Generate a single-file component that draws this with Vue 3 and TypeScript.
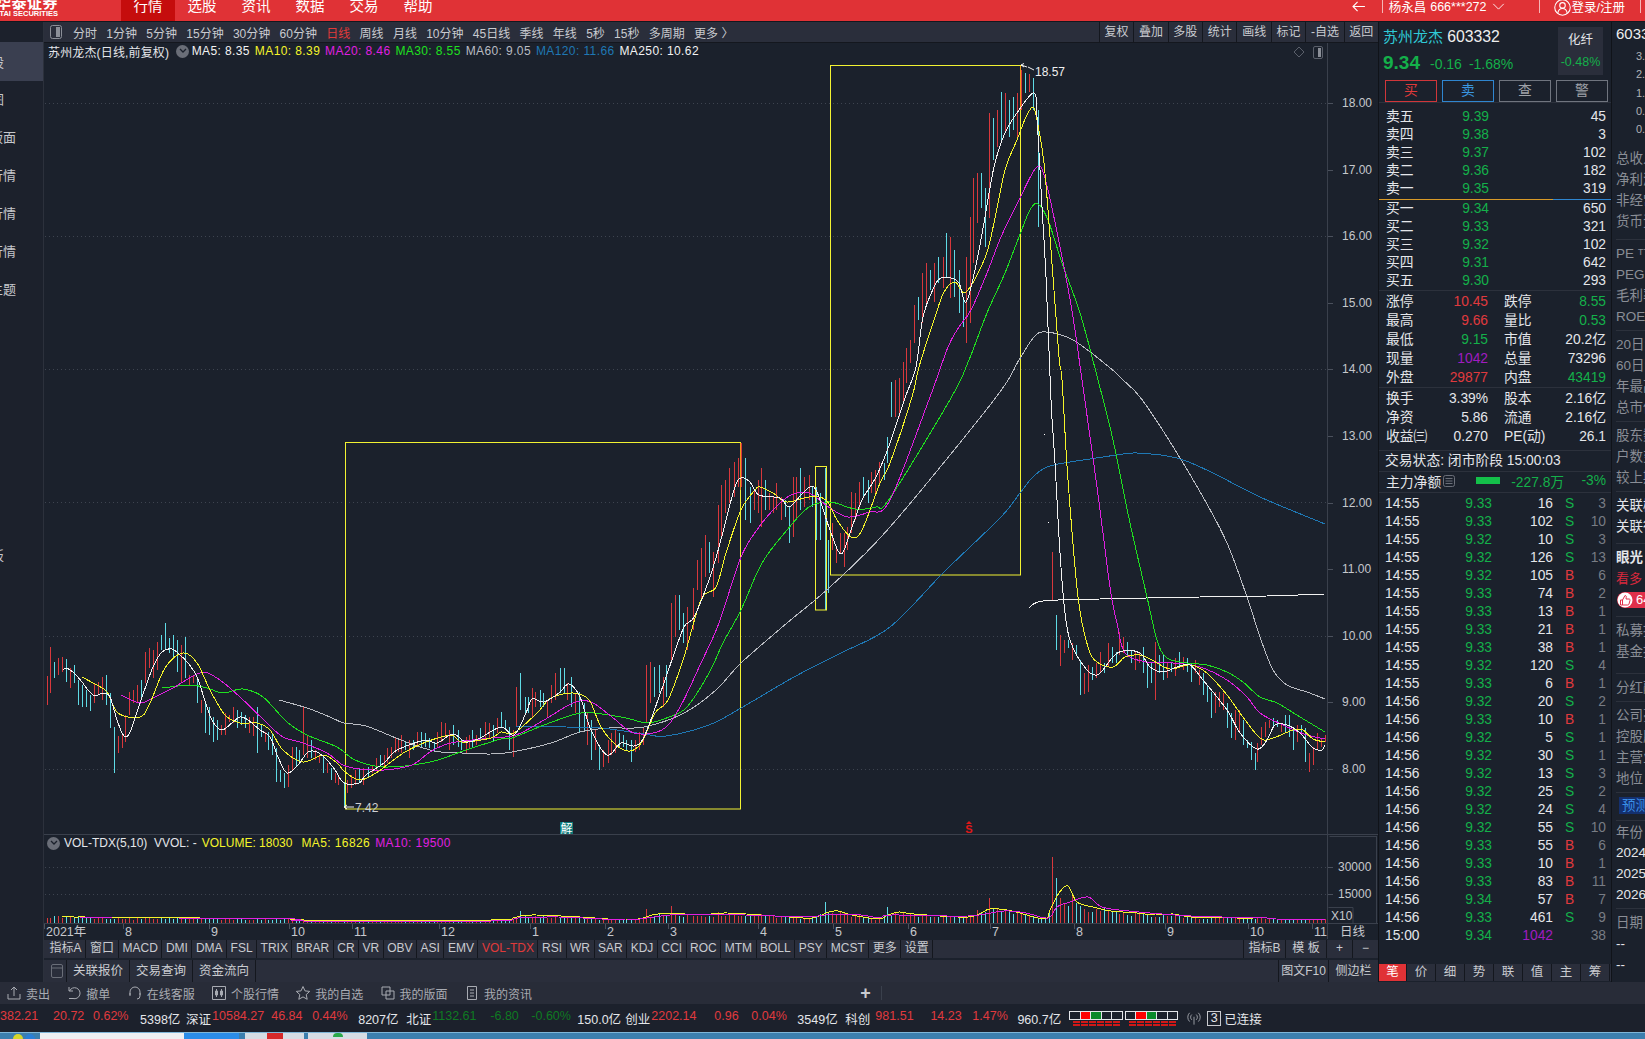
<script setup lang="ts">
type Pt = [number, number]
const pts = (s: string): Pt[] => s.trim().split(/\s+/).map(p => { const [a, b] = p.split(',').map(Number); return [a, b] as Pt })
const smooth = (s: string): string => {
  const p = pts(s)
  let d = `M${p[0][0]} ${p[0][1]}`
  for (let i = 0; i < p.length - 1; i++) {
    const a = p[Math.max(0, i - 1)], b = p[i], c = p[i + 1], e = p[Math.min(p.length - 1, i + 2)]
    d += `C${(b[0] + (c[0] - a[0]) / 6).toFixed(1)} ${(b[1] + (c[1] - a[1]) / 6).toFixed(1)} ${(c[0] - (e[0] - b[0]) / 6).toFixed(1)} ${(c[1] - (e[1] - b[1]) / 6).toFixed(1)} ${c[0]} ${c[1]}`
  }
  return d
}
const ma5 = '63,670 66,668 73,672 82,682 88,690 95,696 103,693 110,697 117,720 124,736 130,732 140,703 153,667 162,652 172,649 180,655 188,663 197,677 207,707 213,722 222,730 233,722 240,717 248,720 260,730 270,737 278,757 287,773 298,765 308,752 317,752 327,760 335,770 344,783 359,783 366,775 384,763 394,752 409,745 426,740 437,743 453,734 466,742 480,738 501,727 514,735 526,713 532,699 544,702 559,693 569,684 580,697 591,730 607,755 621,743 634,746 644,737 659,697 673,657 684,627 694,617 709,580 719,547 734,490 741,478 750,482 759,495 780,498 789,507 801,495 810,487 817,492 830,530 841,554 851,530 862,500 876,477 890,443 905,398 916,367 923,317 934,287 941,278 951,278 959,283 966,302 975,270 984,223 994,167 1005,133 1019,110 1034,93 1037,117 1042,207 1046,277 1051,400 1055,463 1060,553 1065,613 1070,640 1083,665 1097,675 1113,657 1123,651 1140,653 1150,667 1163,672 1177,667 1190,665 1203,680 1227,710 1240,733 1257,749 1267,740 1275,725 1287,725 1300,733 1313,748 1322,750 1325,745'
const ma10 = '82,677 93,683 107,692 118,713 140,717 150,703 165,668 183,653 197,663 210,690 225,715 240,723 257,723 270,730 283,750 303,762 323,755 337,763 345,772 360,780 376,773 387,765 405,752 426,742 451,735 462,742 491,738 501,732 514,733 537,713 551,698 573,693 589,700 601,727 616,745 630,751 642,742 655,713 668,700 684,657 701,600 716,587 726,553 741,510 755,490 760,487 773,493 787,502 809,497 826,500 837,520 851,537 862,530 880,483 890,463 912,397 919,367 934,320 944,292 955,282 966,292 985,258 994,223 1005,170 1017,140 1026,117 1033,107 1037,120 1044,163 1051,250 1059,357 1062,380 1068,480 1078,597 1088,647 1097,662 1113,667 1125,657 1140,655 1152,660 1170,669 1190,665 1207,673 1227,695 1240,713 1260,738 1273,738 1293,730 1303,730 1313,739 1325,742'
const ma20 = '121,695 140,703 153,698 173,688 200,673 217,678 240,697 267,723 283,737 303,743 327,753 343,765 360,769 384,770 412,765 430,752 451,743 491,738 516,735 544,720 573,703 591,702 612,717 634,733 662,730 680,707 701,663 719,623 741,557 759,527 776,507 791,495 809,493 830,508 848,517 869,512 890,500 930,397 948,347 959,327 971,310 987,273 1001,237 1019,200 1037,167 1046,182 1062,257 1073,317 1082,380 1097,487 1110,587 1117,623 1125,653 1147,662 1173,663 1200,667 1227,680 1247,697 1260,713 1283,725 1307,735 1325,739'
const ma30 = '162,688 190,685 207,688 223,693 243,689 263,697 287,722 307,735 337,747 355,760 384,767 430,762 466,750 501,739 512,738 544,725 576,714 594,713 626,718 648,723 669,717 687,707 709,673 723,643 741,610 762,563 787,530 809,507 830,502 855,509 876,507 890,498 951,398 969,360 987,313 1005,273 1019,237 1030,210 1038,204 1048,220 1062,263 1080,313 1098,380 1113,440 1130,523 1147,597 1157,640 1167,658 1187,663 1207,665 1227,672 1243,682 1260,697 1277,703 1300,717 1325,732'
const ma60 = '279,700 307,708 330,717 344,723 366,726 401,740 434,751 462,753 491,754 512,752 551,743 580,732 609,728 644,727 684,713 716,690 741,663 787,623 830,587 890,527 994,400 1019,360 1034,337 1046,332 1073,340 1109,367 1123,380 1140,397 1167,437 1203,497 1227,543 1247,597 1260,637 1273,670 1287,685 1307,692 1325,699'
const ma120 = '516,727 566,727 601,728 644,734 666,736 709,725 741,708 794,677 841,653 890,627 944,572 1000,518 1020,493 1033,477 1050,466 1090,459 1117,455 1137,453 1177,458 1213,473 1260,497 1325,524'
const ma250 = '1029,608 1043,601 1100,599 1200,597 1267,596 1325,594'
const lines = [
  { d: smooth(ma60), c: '#b9bcc2' }, { d: smooth(ma120), c: '#1f78b4' }, { d: smooth(ma250), c: '#f2f2f2' },
  { d: smooth(ma30), c: '#1fe01f' }, { d: smooth(ma20), c: '#e01fe0' }, { d: smooth(ma10), c: '#f5f52a' }, { d: smooth(ma5), c: '#f2f2f2' },
]

interface Bar { x: number; y1: number; y2: number; up: boolean }
const parse = (s: string, ox: number, oy: number, sx: number): Bar[] => s.trim().split(/\s+/).map(t => {
  const [z, a, b, c] = t.split(',').map(Number)
  return { x: Math.round(ox + z / sx) + 0.5, y1: Math.round(oy + a / 3), y2: Math.round(oy + b / 3), up: c === 1 }
})
const bars: Bar[] = [
  ...parse('20,228,315,1 31,140,280,1 43,185,235,0 55,175,225,1 67,170,215,1 79,178,245,0 91,205,265,1 103,195,250,0 115,240,315,0 127,255,320,0 139,270,320,0 151,285,332,0 163,250,310,1 175,245,285,1 187,232,300,1 199,225,315,0 211,280,385,0 223,382,518,0 233,408,458,1 245,405,445,1 256,345,425,1 268,275,345,1 280,270,310,1 292,255,310,1 304,240,290,0 316,155,250,1 328,145,205,1 340,150,235,1 352,125,210,1 364,105,150,0 376,70,150,0 388,115,160,0 400,105,175,0 412,120,215,0 424,135,245,1 436,110,235,0 448,225,255,1 460,225,250,1 470,230,310,0 482,300,340,1 494,310,400,0 506,320,405,0 518,350,425,0 530,360,420,0 542,375,405,1 554,340,405,1 566,345,365,1 578,320,370,1 590,330,385,0 602,335,375,0 614,345,385,0 626,350,400,1 638,350,408,1 650,320,458,0 662,375,410,0 674,395,425,1 685,395,450,0 695,400,465,0 707,445,545,0 719,510,545,0 731,520,565,0 743,495,560,1 755,440,510,1 767,440,500,0 778,450,490,0 790,320,465,1 802,405,475,1 814,420,475,0 826,450,480,1 838,465,490,1 850,465,520,0 862,490,520,1 872,505,540,0 884,520,550,1 895,525,555,1', 40, 600, 3),
  ...parse('38,1055,1130,0 47,1050,1090,1 58,1035,1075,1 70,1020,1065,1 82,1015,1060,0 93,1015,1065,1 105,1010,1040,0 117,1005,1030,1 128,985,1020,1 140,975,1010,0 150,975,1015,1 160,955,1000,1 171,950,985,1 181,925,970,1 190,930,965,1 200,915,970,1 210,935,960,0 222,930,985,1 233,930,960,0 244,905,945,1 255,905,950,0 266,910,950,0 278,925,955,0 290,935,965,0 300,905,950,1 311,875,935,1 322,880,920,1 334,900,960,1 345,885,945,0 357,900,950,0 368,930,960,0 380,920,970,1 389,915,955,1 398,900,950,0 410,915,945,1 421,895,930,0 433,875,930,1 444,880,925,1 455,885,935,0 467,865,910,1 478,845,890,0 490,870,900,0 500,890,960,0 512,900,980,1 522,770,890,1 533,730,840,0 545,800,850,0 555,800,850,0 565,775,860,1 575,785,830,1 587,780,830,0 597,790,830,0 608,810,860,1 620,765,820,1 631,730,810,1 643,715,790,0 655,715,790,0 664,760,810,1 676,740,830,0 687,790,850,1 698,785,910,0 710,820,905,0 720,850,945,1 732,870,990,0 743,900,960,1 754,950,1020,0 765,960,1010,1 777,930,1000,1 788,910,975,1 797,900,970,1 808,910,950,0 820,915,950,0 830,930,960,0 842,930,995,0 853,930,965,1 864,905,960,1 875,890,945,1 885,705,880,1 897,695,820,1 908,710,800,0 920,705,790,0 932,740,830,1 942,705,800,0 954,520,690,1 965,495,620,1 976,495,600,0 987,550,640,0 1000,530,660,1 1017,475,600,1 1028,390,480,1 1040,355,510,1 1050,315,440,1 1062,335,430,0 1073,365,500,1 1085,225,400,1 1096,165,320,1 1107,150,250,1 1118,115,220,1 1130,95,200,1 1141,85,170,1 1152,38,170,1 1163,85,270,0 1175,170,280,0 1186,180,240,1 1197,150,250,1 1206,115,290,1 1218,150,240,0 1230,190,240,1 1240,200,250,1 1250,160,240,1 1262,200,270,1 1273,210,260,0 1284,230,340,0 1295,140,320,1 1306,140,270,1 1317,115,240,0 1328,140,230,1 1340,135,210,1 1350,170,230,0 1362,170,330,0 1373,190,330,0 1385,115,540,0 1395,330,490,0 1405,280,360,1 1418,350,400,1 1428,310,370,1 1438,310,410,1 1448,290,360,1 1459,185,310,1 1470,190,270,1 1482,155,240,1 1493,140,200,0 1505,150,220,0 1516,125,190,1 1527,120,190,1 1538,95,165,1 1550,100,150,0 1560,20,100,0', 330, 430, 2.8),
  ...parse('312,995,1100,0 323,990,1100,1 333,985,1100,1 343,935,1060,1 354,895,1000,1 365,870,940,1 376,765,880,1 387,740,810,0 398,670,820,1 410,640,760,1 421,660,720,0 432,640,755,1 443,620,700,0 455,620,715,1 466,550,680,0 477,560,745,1 488,600,740,0 500,660,790,0 511,740,830,0 522,620,880,1 533,500,820,1 540,385,640,1 552,370,520,1 563,370,475,0 575,415,590,0 586,190,505,1 597,205,330,0 608,180,290,1 620,125,280,0 631,130,250,1 642,150,260,0 653,140,240,0 664,130,260,1 675,60,180,1 686,68,130,0 698,72,125,1 708,85,180,0 722,180,530,0', 780, 50, 2.8),
  ...parse('157,515,660,1 169,705,810,0 181,765,858,1 193,780,820,1 205,780,805,0 217,790,840,1 229,795,825,0 241,840,945,0 253,880,942,1 265,855,935,1 277,860,900,0 289,850,895,1 301,815,875,1 313,850,880,0 325,790,860,1 337,800,850,0 349,815,850,0 358,755,825,1 369,770,820,1 381,785,830,0 393,810,850,0 405,815,870,1 417,820,850,1 430,800,880,0 442,855,925,0 454,850,910,0 466,785,960,1 478,825,880,0 490,825,900,0 502,850,895,1 514,850,875,0 526,835,888,1 538,815,865,0 550,830,870,1 560,835,875,0 572,850,905,0 584,840,880,1 596,870,915,1 608,880,945,0 620,915,965,0 632,935,1015,0 644,935,1000,1 656,935,980,1 668,940,990,1 680,970,1045,0 692,1000,1075,0 704,990,1080,1 716,990,1060,1 728,1020,1095,0 740,1080,1105,0 752,1085,1140,0 764,1120,1170,0 772,1090,1145,1 784,1040,1095,1 796,1025,1070,1 808,1020,1045,1 820,1015,1040,0 832,1020,1040,0 844,1030,1055,1 856,1005,1060,0 868,1005,1070,0 880,1050,1110,0 892,1035,1085,1 904,1035,1060,0 916,1045,1145,0 928,1120,1175,1 940,1100,1155,1 952,1060,1110,1 964,1075,1100,1 975,1065,1085,1', 1000, 380, 3),
]
const candlePath = (up: boolean) => bars.filter(b => b.up === up).map(b => `M${b.x} ${b.y1}V${b.y2}`).join('')

const vma5 = '62,916 74,917 85,917 112,918 200,918 295,919 304,920 491,920 513,918 520,916 536,915 580,917 625,920 643,918 652,915 670,913 700,915 727,913 789,917 812,918 829,912 838,911 852,915 879,919 888,915 899,912 914,914 968,917 990,909 1012,911 1044,919 1050,910 1059,893 1068,886 1077,902 1093,907 1111,911 1137,913 1155,915 1173,914 1191,917 1236,918 1267,918 1276,919 1325,919'
const vma10 = '80,917 112,918 179,918 295,919 304,921 491,921 518,918 558,917 625,920 647,918 670,915 700,915 745,915 807,917 825,915 861,915 879,918 892,915 968,916 1004,911 1026,913 1048,918 1057,907 1070,902 1088,897 1102,907 1129,911 1191,916 1267,918 1276,919 1325,919'
const lerp = (p: Pt[], x: number): number => {
  if (x <= p[0][0]) return p[0][1]
  for (let i = 1; i < p.length; i++) if (x <= p[i][0]) return p[i - 1][1] + (p[i][1] - p[i - 1][1]) * (x - p[i - 1][0]) / (p[i][0] - p[i - 1][0])
  return p[p.length - 1][1]
}
const vp = pts(vma5)
let seed = 17
const rnd = () => { seed = (seed * 16807) % 2147483647; return seed / 2147483647 }
const spikes: Pt[] = [[520, 911], [646, 909], [670, 906], [824, 902], [887, 907], [977, 910], [989, 898], [1053, 857], [1057, 878], [1061, 898], [1065, 903], [1069, 906]]
const volBars = [...bars, ...[1041, 1045, 1049].map(x => ({ x: x + 0.5, y1: 0, y2: 0, up: false }))].map(b => {
  const ma = lerp(vp, b.x)
  let top = Math.round(922 - Math.max(2, (922 - ma) * (0.6 + rnd() * 0.55)))
  const s = spikes.find(q => Math.abs(q[0] - b.x) < 2)
  if (s) top = s[1]
  return { x: b.x, top, up: b.up }
})
const volPath = (up: boolean) => volBars.filter(b => b.up === up).map(b => `M${b.x} ${b.top}V923`).join('')

const gridY = [103, 236, 369, 502, 636, 769]
const priceAxis = [18, 17, 16, 15, 14, 13, 12, 11, 10, 9, 8].map(p => ({ y: Math.round(769 - (p - 8) * 66.6), t: p.toFixed(2) }))
const months: [number, string][] = [[46, '2021年'], [125, '8'], [211, '9'], [291, '10'], [354, '11'], [441, '12'], [532, '1'], [607, '2'], [670, '3'], [760, '4'], [835, '5'], [910, '6'], [992, '7'], [1076, '8'], [1167, '9'], [1250, '10'], [1314, '11']]

const navs = ['行情', '选股', '资讯', '数据', '交易', '帮助']
const sideItems = [
  { t: '个股', cls: 'short active' }, { t: '分时图', cls: 'short' }, { t: '我的版面', cls: 'long' }, { t: '沪深行情', cls: 'long' },
  { t: '港股行情', cls: 'long' }, { t: '期货行情', cls: 'long' }, { t: '热门主题', cls: 'long' },
]
const periods = ['分时', '1分钟', '5分钟', '15分钟', '30分钟', '60分钟', '日线', '周线', '月线', '10分钟', '45日线', '季线', '年线', '5秒', '15秒', '多周期', '更多 〉']
const rightTools = ['复权', '叠加', '多股', '统计', '画线', '标记', '-自选', '返回']
const legend = [
  { t: 'MA5: 8.35', c: 'c-white' }, { t: 'MA10: 8.39', c: 'c-yellow' }, { t: 'MA20: 8.46', c: 'c-mag' }, { t: 'MA30: 8.55', c: 'c-lime' },
  { t: 'MA60: 9.05', c: 'c-gray' }, { t: 'MA120: 11.66', c: 'c-blue' }, { t: 'MA250: 10.62', c: 'c-white' },
]
const indicators = ['MACD', 'DMI', 'DMA', 'FSL', 'TRIX', 'BRAR', 'CR', 'VR', 'OBV', 'ASI', 'EMV', 'VOL-TDX', 'RSI', 'WR', 'SAR', 'KDJ', 'CCI', 'ROC', 'MTM', 'BOLL', 'PSY', 'MCST', '更多', '设置']
const asks = [['卖五', '9.39', '45'], ['卖四', '9.38', '3'], ['卖三', '9.37', '102'], ['卖二', '9.36', '182'], ['卖一', '9.35', '319']]
const bids = [['买一', '9.34', '650'], ['买二', '9.33', '321'], ['买三', '9.32', '102'], ['买四', '9.31', '642'], ['买五', '9.30', '293']]
const stats1 = [
  ['涨停', '10.45', 'red', '跌停', '8.55', 'green'], ['最高', '9.66', 'red', '量比', '0.53', 'green'], ['最低', '9.15', 'green', '市值', '20.2亿', 'white'],
  ['现量', '1042', 'purple', '总量', '73296', 'white'], ['外盘', '29877', 'red', '内盘', '43419', 'green'],
]
const stats2 = [
  ['换手', '3.39%', 'white', '股本', '2.16亿', 'white'], ['净资', '5.86', 'white', '流通', '2.16亿', 'white'], ['收益㈢', '0.270', 'white', 'PE(动)', '26.1', 'white'],
]
const ticks: [string, string, string, string, string][] = [
  ['14:55', '9.33', '16', 'S', '3'], ['14:55', '9.33', '102', 'S', '10'], ['14:55', '9.32', '10', 'S', '3'], ['14:55', '9.32', '126', 'S', '13'],
  ['14:55', '9.32', '105', 'B', '6'], ['14:55', '9.33', '74', 'B', '2'], ['14:55', '9.33', '13', 'B', '1'], ['14:55', '9.33', '21', 'B', '1'],
  ['14:55', '9.33', '38', 'B', '1'], ['14:55', '9.32', '120', 'S', '4'], ['14:55', '9.33', '6', 'B', '1'], ['14:56', '9.32', '20', 'S', '2'],
  ['14:56', '9.33', '10', 'B', '1'], ['14:56', '9.32', '5', 'S', '1'], ['14:56', '9.32', '30', 'S', '1'], ['14:56', '9.32', '13', 'S', '3'],
  ['14:56', '9.32', '25', 'S', '2'], ['14:56', '9.32', '24', 'S', '4'], ['14:56', '9.32', '55', 'S', '10'], ['14:56', '9.33', '55', 'B', '6'],
  ['14:56', '9.33', '10', 'B', '1'], ['14:56', '9.33', '83', 'B', '11'], ['14:56', '9.34', '57', 'B', '7'], ['14:56', '9.33', '461', 'S', '9'],
  ['15:00', '9.34', '1042', '', '38'],
]
const quoteTabs = ['笔', '价', '细', '势', '联', '值', '主', '筹']
const sideGroups: { rows: string[]; tail?: string }[] = [
  { rows: ['总收入', '净利润', '非经常', '货币资'], tail: 'tail-a' },
  { rows: ['PE ᵀᵀᴹ', 'PEG', '毛利率', 'ROE'] },
  { rows: ['20日涨', '60日涨', '年最高', '总市值'] },
  { rows: ['股东数', '户数变', '较上期'] },
]
const sideGroups2: { rows: string[]; tail?: string }[] = [
  { rows: ['私募持', '基金持'], tail: 'tail-b' },
  { rows: ['分红融'] },
  { rows: ['公司亮', '控股股', '主营业', '地位'] },
]
const actions = [
  { t: '卖出', d: 'M2 9v5h12V9M8 11V2M5 5l3-3 3 3' },
  { t: '撤单', d: 'M3 2v4h4M3.5 6A5.5 5.5 0 1 1 7 13.5H3' },
  { t: '在线客服', d: 'M3 10V7a5 5 0 0 1 10 0v3M3 8v3M13 8v3a3 3 0 0 1-3 3' },
  { t: '个股行情', d: 'M1.5 1.5h13v13h-13zM5.5 4v8M10.5 4v8M4.5 6h2v4h-2zM9.5 6h2v4h-2z' },
  { t: '我的自选', d: 'M8 1.5l2 4.4 4.7.5-3.5 3.2 1 4.7L8 11.9l-4.2 2.4 1-4.7L1.3 6.4 6 5.9z' },
  { t: '我的版面', d: 'M2 2h8v8H2zM6 6h8v8H6z' },
  { t: '我的资讯', d: 'M3.5 1.5h9v13h-9zM6 5h4M6 8h4M6 11h4' },
]
const indices = [
  { price: '382.21', chg: '20.72', pct: '0.62%', amt: '5398亿', cls: 'red', m: [0, 0, 14.8, 8.7, 11.6] },
  { name: '深证', price: '10584.27', chg: '46.84', pct: '0.44%', amt: '8207亿', cls: 'red', m: [5.7, 1, 7, 9.7, 10.6] },
  { name: '北证', price: '1132.61', chg: '-6.80', pct: '-0.60%', amt: '150.0亿', cls: 'dgreen', m: [7.7, 1, 13.8, 12.5, 6.4] },
  { name: '创业', price: '2202.14', chg: '0.96', pct: '0.04%', amt: '3549亿', cls: 'red', m: [4.2, 1, 17.8, 12.7, 10.6] },
  { name: '科创', price: '981.51', chg: '14.23', pct: '1.47%', amt: '960.7亿', cls: 'red', m: [7.7, 5, 16.8, 10.7, 9.6] },
]
const px = (n: number) => ({ marginLeft: `${n}px` })
const meterCells = ['#1c212c', '#f00', '#0a8a2a', '#1c212c', '#1c212c']
</script>

<template>
  <div class="app">
    <header class="topbar">
      <div class="logo">
        <div class="logo-cn">华泰证券</div>
        <div class="logo-en">HUATAI SECURITIES</div>
      </div>
      <nav class="nav">
        <span v-for="(n, i) in navs" :key="n" class="nav-item" :class="{ on: i === 0 }">{{ n }}</span>
      </nav>
      <div class="user">
        <svg class="back" viewBox="0 0 16 12"><path d="M15 6H2M7 1L2 6l5 5" /></svg>
        <span class="vsep"></span>
        <span class="uname">杨永昌</span><span class="uid">666***272</span>
        <svg class="chev" viewBox="0 0 14 8"><path d="M1 1l6 6 6-6" /></svg>
        <span class="vsep sep2"></span>
        <svg class="uicon" viewBox="0 0 16 16"><circle cx="8" cy="8" r="7.3" /><circle cx="8" cy="6" r="2.6" /><path d="M3.5 13.5c.5-3 2.5-4.5 4.5-4.5s4 1.500 4.500 4.500" /></svg>
        <span class="login">登录/注册</span>
        <span class="vsep sep3"></span>
      </div>
    </header>

    <div class="body">
      <aside class="sidebar">
        <div v-for="s in sideItems" :key="s.t" class="side-item" :class="s.cls"><span>{{ s.t }}</span></div>
        <div class="side-spacer"></div>
        <div class="side-item short"><span>板</span></div>
      </aside>

      <main class="center">
        <div class="toolbar">
          <svg class="panel-ico" viewBox="0 0 12 14"><rect x="0.5" y="0.5" width="11" height="13" rx="2" /><rect x="6" y="2" width="4" height="10" class="fill" /></svg>
          <span v-for="p in periods" :key="p" class="period" :class="{ sel: p === '日线' }">{{ p }}</span>
          <div class="tools">
            <span v-for="t in rightTools" :key="t" class="tool">{{ t }}</span>
          </div>
        </div>

        <div class="chart">
          <svg class="plot" width="1334" height="896" viewBox="44 43 1334 896">
            <g class="grid">
              <line v-for="y in gridY" :key="y" x1="45" x2="1326" :y1="y + 0.5" :y2="y + 0.5" />
              <line x1="45" x2="1326" y1="867.5" y2="867.5" />
              <line x1="45" x2="1326" y1="894.500" y2="894.500" />
            </g>
            <g class="frame">
              <line x1="1327.5" x2="1327.5" y1="43" y2="939" />
              <line x1="44" x2="1378" y1="834.5" y2="834.5" />
              <line x1="44" x2="1378" y1="923.5" y2="923.5" />
              <line x1="1329.5" x2="1376.5" y1="836.5" y2="836.5" />
              <line x1="1376.5" x2="1376.5" y1="836" y2="923" />
              <path d="M1328.500 907.500H1353V923" fill="none" />
            </g>
            <g v-for="a in priceAxis" :key="a.t">
              <line class="tick" x1="1328" x2="1333" :y1="a.y + 0.5" :y2="a.y + 0.5" />
              <text class="axis" x="1342" :y="a.y + 4">{{ a.t }}</text>
            </g>

            <g class="bars" shape-rendering="crispEdges">
              <path :d="candlePath(true)" stroke="#d8383c" />
              <path :d="candlePath(false)" stroke="#5fdbe6" />
              <path :d="volPath(true)" stroke="#d8383c" />
              <path :d="volPath(false)" stroke="#5fdbe6" />
            </g>
            <rect class="box" x="345.500" y="442.500" width="395" height="366.500" />
            <rect class="box" x="815.500" y="466.500" width="11" height="143.500" />
            <rect class="box" x="830.500" y="65.500" width="190" height="509.500" />
            <path class="orange" d="M740.500 443V490M1020.500 66V110" />
            <path v-for="l in lines" :key="l.d" :d="l.d" :stroke="l.c" class="ma" shape-rendering="crispEdges" />
            <path :d="smooth(vma5)" stroke="#f5f52a" class="ma" shape-rendering="crispEdges" />
            <path :d="smooth(vma10)" stroke="#e01fe0" class="ma" shape-rendering="crispEdges" />
            <rect x="1044" y="434" width="1" height="1" fill="#fff" />
            <rect x="1048" y="522" width="1" height="1" fill="#fff" />

            <path class="note" d="M1021 65l6 2M1028 67l6 3M1021 65l3-1.500M1021 65l3 2" />
            <text class="lbl" x="1035" y="76">18.57</text>
            <path class="note" d="M344 807h10M344 807l3-2M344 807l3 2" />
            <text class="lbl dim" x="355" y="812">7.42</text>

            <rect x="560" y="822" width="13" height="12" fill="#0e7a7a" />
            <text class="mark" x="566.500" y="833">解</text>
            <path d="M969 821l-3 3h6z" fill="#e01818" />
            <text class="mark s" x="969" y="833">S</text>

            <path class="ico" d="M1299 47l5 5-5 5-5-5z" />
            <rect class="ico" x="1313.500" y="46.500" width="9" height="12" rx="1.500" />
            <rect x="1318" y="48" width="3" height="9" fill="#8b8f98" />

            <text class="axis" x="1338" y="871">30000</text>
            <line class="tick" x1="1328" x2="1333" y1="867.500" y2="867.500" />
            <text class="axis" x="1338" y="898">15000</text>
            <line class="tick" x1="1328" x2="1333" y1="894.500" y2="894.500" />
            <text class="axis" x="1331" y="920">X10</text>

            <g v-for="m in months" :key="m[0]">
              <line class="tick" :x1="m[0] - 1.500" :x2="m[0] - 1.500" y1="924" y2="929" />
              <text class="axis time" :x="m[0]" y="936">{{ m[1] }}</text>
            </g>
            <text class="axis time" x="1340" y="936">日线</text>
          </svg>

          <div class="legend">
            <span class="lg-title">苏州龙杰(日线,前复权)</span>
            <span class="drop top"><svg viewBox="0 0 8 6"><path d="M1 1l3 3 3-3" /></svg></span>
            <span v-for="l in legend" :key="l.t" class="lg-item" :class="l.c">{{ l.t }}</span>
          </div>
          <div class="legend vol">
            <span class="drop"><svg viewBox="0 0 8 6"><path d="M1 1l3 3 3-3" /></svg></span>
            <span class="vol-name">VOL-TDX(5,10) &nbsp;VVOL: -</span>
            <span class="c-yellow v-a">VOLUME: 18030</span>
            <span class="c-yellow v-b">MA5: 16826</span>
            <span class="c-mag v-b">MA10: 19500</span>
          </div>
        </div>

        <div class="ind-tabs">
          <span class="tab first">指标A</span>
          <span class="tab win">窗口</span>
          <span v-for="i in indicators" :key="i" class="tab" :class="{ sel: i === 'VOL-TDX' }">{{ i }}</span>
          <span class="ind-right">
            <span class="tab fix-a">指标B</span>
            <span class="tab fix-b">模 板</span>
            <span class="tab sq">+</span>
            <span class="tab sq">−</span>
          </span>
        </div>
        <div class="rel-tabs">
          <span class="tab ic"><svg viewBox="0 0 12 14"><rect x="0.500" y="0.500" width="11" height="13" rx="1.500" /><path d="M1 4h10" /></svg></span>
          <span class="tab wide">关联报价</span>
          <span class="tab wide">交易查询</span>
          <span class="tab wide">资金流向</span>
          <span class="ind-right">
            <span class="tab f10">图文F10</span>
            <span class="tab f10">侧边栏</span>
          </span>
        </div>
      </main>

      <section class="quote">
        <div class="q-head">
          <div class="q-info">
            <div class="q-name"><span class="q-cn">苏州龙杰</span> <span class="q-code">603332</span></div>
            <div class="q-price"><b>9.34</b><span class="qp1">-0.16</span><span class="qp2">-1.68%</span></div>
          </div>
          <div class="q-sector"><span>化纤</span><em>-0.48%</em></div>
        </div>
        <div class="q-btns">
          <span class="qb buy">买</span><span class="qb sell">卖</span><span class="qb">查</span><span class="qb">警</span>
        </div>
        <div class="book asks">
          <div v-for="r in asks" :key="r[0]" class="row"><span class="l">{{ r[0] }}</span><span class="p green">{{ r[1] }}</span><span class="v">{{ r[2] }}</span></div>
        </div>
        <div class="split"><i></i><u></u></div>
        <div class="book">
          <div v-for="r in bids" :key="r[0]" class="row"><span class="l">{{ r[0] }}</span><span class="p green">{{ r[1] }}</span><span class="v">{{ r[2] }}</span></div>
        </div>
        <div class="hr"></div>
        <div class="stats">
          <div v-for="r in stats1" :key="r[0]" class="srow"><span class="sl">{{ r[0] }}</span><span class="sv" :class="r[2]">{{ r[1] }}</span><span class="sl second">{{ r[3] }}</span><span class="sv" :class="r[5]">{{ r[4] }}</span></div>
        </div>
        <div class="hr"></div>
        <div class="stats pad">
          <div v-for="r in stats2" :key="r[0]" class="srow"><span class="sl">{{ r[0] }}</span><span class="sv" :class="r[2]">{{ r[1] }}</span><span class="sl second">{{ r[3] }}</span><span class="sv" :class="r[5]">{{ r[4] }}</span></div>
        </div>
        <div class="hr"></div>
        <div class="state">交易状态: 闭市阶段 15:00:03</div>
        <div class="hr"></div>
        <div class="flow">
          <span>主力净额</span>
          <svg class="flow-ico" viewBox="0 0 12 12"><rect x="0.500" y="0.500" width="11" height="11" rx="2" /><path d="M2.500 3.500h7M2.500 6h7M2.500 8.500h7" /></svg>
          <i class="flow-bar"></i>
          <span class="green fa">-227.8万</span>
          <span class="green fb">-3%</span>
        </div>
        <div class="hr"></div>
        <div class="ticks">
          <div v-for="(t, i) in ticks" :key="i" class="tk">
            <span class="t1">{{ t[0] }}</span>
            <span class="t2 green">{{ t[1] }}</span>
            <span class="t3" :class="{ purple: t[2] === '1042' }">{{ t[2] }}</span>
            <span class="t4" :class="t[3] === 'B' ? 'red' : 'green'">{{ t[3] }}</span>
            <span class="t5">{{ t[4] }}</span>
          </div>
        </div>
        <div class="q-tabs">
          <span v-for="(q, i) in quoteTabs" :key="q" class="qt" :class="{ on: i === 0 }">{{ q }}</span>
        </div>
      </section>

      <aside class="extra">
        <div class="ex-code">603332</div>
        <div class="ex-nums"><span>3.16</span><span>2.41</span><span>1.60</span><span>0.80</span><span>0.00</span></div>
        <div class="ex-list">
          <div v-for="g in sideGroups" :key="g.rows[0]" class="ex-group" :class="g.tail">
            <div v-for="r in g.rows" :key="r" class="ex-row">{{ r }}</div>
          </div>
          <div class="ex-group tail-c">
            <div class="ex-row white">关联概念</div>
            <div class="ex-row white">关联行业</div>
          </div>
          <div class="ex-group tail-c">
            <div class="ex-row white bold">眼光</div>
            <div class="ex-row redtxt">看多</div>
            <div class="ex-row thumb">
              <span class="pill"><svg viewBox="0 0 16 16"><circle cx="8" cy="8" r="7.500" fill="#fff" /><path d="M3.500 8h2v5h-2zM5.500 8l2.500-4.500c1 0 1.500.8 1.200 2L9 7h3c.8 0 1.200.6 1 1.300l-1 3.700c-.2.600-.6 1-1.300 1H5.500" fill="none" stroke="#e0304a" stroke-width="1" /></svg><b>64</b></span>
            </div>
          </div>
          <div v-for="g in sideGroups2" :key="g.rows[0]" class="ex-group" :class="g.tail">
            <div v-for="r in g.rows" :key="r" class="ex-row">{{ r }}</div>
          </div>
          <div class="ex-group predict-g">
            <div class="ex-row"><span class="predict">预测</span></div>
          </div>
          <div class="ex-group tight-t">
            <div class="ex-row head">年份</div>
            <div class="ex-row white">2024</div>
            <div class="ex-row white">2025</div>
            <div class="ex-row white">2026</div>
          </div>
          <div class="ex-group last">
            <div class="ex-row">日期</div>
            <div class="ex-row white">--</div>
            <div class="ex-row white">--</div>
          </div>
        </div>
      </aside>
    </div>

    <div class="actions">
      <span v-for="a in actions" :key="a.t" class="act">
        <svg viewBox="0 0 16 16"><path :d="a.d" /></svg>{{ a.t }}
      </span>
      <span class="plus">+</span>
      <span class="plus-sep"></span>
    </div>

    <div class="status">
      <span v-for="x in indices" :key="x.price" class="idx">
        <span v-if="x.name" class="i-name" :style="px(x.m[0])">{{ x.name }}</span>
        <span :class="x.cls" :style="px(x.m[1])">{{ x.price }}</span>
        <span :class="x.cls" :style="px(x.m[2])">{{ x.chg }}</span>
        <span :class="x.cls" :style="px(x.m[3])">{{ x.pct }}</span>
        <span class="i-amt" :style="px(x.m[4])">{{ x.amt }}</span>
      </span>
      <span v-for="m in 2" :key="m" class="meter">
        <span class="cells"><i v-for="(c, i) in meterCells" :key="i" :style="{ background: c }"></i></span>
        <span class="dashes"><i v-for="d in 6" :key="d"></i></span>
      </span>
      <svg class="signal" viewBox="0 0 16 16"><path d="M8 6v9M5.500 3.500a4 4 0 0 0 0 6M10.500 3.500a4 4 0 0 1 0 6M3 1.500a7 7 0 0 0 0 10M13 1.500a7 7 0 0 1 0 10" /></svg>
      <span class="conn-n">3</span>
      <span class="conn">已连接</span>
    </div>

    <footer class="taskbar">
      <span class="dot d1"></span><span class="dot d2"></span>
      <span class="tb-white"></span><span class="tb-blue"></span>
      <span class="tb-tile"><i class="tile-red"></i></span>
      <span class="tb-tile"><i class="tile-green"></i></span>
    </footer>
  </div>
</template>

<style scoped>
.app {
  width: 1645px;
  height: 1039px;
  overflow: hidden;
  display: flex;
  flex-direction: column;
  background: #1b212c;
  color: #e4e6ea;
  font-family: "Liberation Sans", "Noto Sans CJK SC", sans-serif;
  font-size: 12px;
}
svg { display: block; }

/* top bar */
.topbar {
  height: 22px;
  box-sizing: border-box;
  flex: none;
  background: #e03236;
  display: flex;
  color: #fff;
  border-bottom: 1px solid #14171e;
  overflow: hidden;
}
.logo { width: 121px; flex: none; overflow: hidden; display: flex; flex-direction: column; align-items: flex-end; padding-right: 63px; box-sizing: border-box; }
.logo-cn { font-size: 15px; font-weight: 700; line-height: 10px; margin-top: -2px; white-space: nowrap; letter-spacing: 0.5px; }
.logo-en { font-size: 7.5px; font-weight: 700; line-height: 10px; margin-top: 1px; white-space: nowrap; }
.nav { display: flex; }
.nav-item { width: 54px; height: 21px; font-size: 14.500px; line-height: 12px; text-align: center; }
.nav-item.on { background: #c50d0d; }
.user { margin-left: auto; display: flex; height: 13px; align-items: center; }
.back { width: 15px; height: 11px; fill: none; stroke: #fff; stroke-width: 1.200; margin-right: 16px; }
.vsep { width: 1px; height: 13px; background: #f5b5b5; }
.uname { margin-left: 6px; font-size: 12.500px; white-space: nowrap; }
.uid { margin-left: 4px; font-size: 12.500px; white-space: nowrap; }
.chev { width: 13px; height: 7px; fill: none; stroke: #fff; margin-left: 5px; }
.sep2 { margin-left: 34px; }
.uicon { width: 17px; height: 17px; fill: none; stroke: #fff; margin-left: 14px; margin-top: 2px; }
.login { margin-left: 1px; font-size: 12.500px; }
.sep3 { margin-left: 15px; margin-right: 4px; }

.body { display: flex; height: 960px; flex: none; }

/* sidebar */
.sidebar { width: 44px; flex: none; box-sizing: border-box; border-right: 1px solid #2c313c; display: flex; flex-direction: column; overflow: hidden; background: #1c212c; padding-top: 20px; }
.side-item { height: 38px; flex: none; display: flex; justify-content: flex-end; align-items: center; font-size: 13px; color: #c6c8cc; white-space: nowrap; overflow: hidden; }
.side-item span { flex: none; }
.side-item.short { padding-right: 39px; }
.side-item.long { padding-right: 27px; }
.side-item.active { background: #3a3f50; height: 39px; margin-bottom: -2px; }
.side-spacer { height: 228px; flex: none; }

/* center */
.center { width: 1334px; flex: none; display: flex; flex-direction: column; }
.toolbar { height: 21px; box-sizing: border-box; flex: none; display: flex; align-items: center; background: #2a2e3b; border-bottom: 1px solid #14171e; color: #c9cbd0; padding-left: 6px; }
.panel-ico { width: 12px; height: 14px; fill: none; stroke: #8b8f98; margin-right: 11px; flex: none; }
.panel-ico .fill { fill: #8b8f98; stroke: none; }
.period { margin-right: 9.300px; white-space: nowrap; }
.period.sel { color: #e03a3a; }
.tools { margin-left: auto; display: flex; height: 20px; }
.tool { padding: 0 4.700px; line-height: 20px; border-left: 1px solid #14171e; white-space: nowrap; }

.chart { position: relative; height: 896px; flex: none; }
.plot { display: block; }
.grid line { stroke: #3e4450; stroke-dasharray: 1 3; }
.frame line, .frame path { stroke: #3a404c; }
.tick { stroke: #4a505c; }
.axis { fill: #c6c8cc; font-size: 12px; }
.axis.time { font-size: 12.500px; }
.bars path { fill: none; stroke-width: 1; }
.box { fill: none; stroke: #f2f232; stroke-width: 1; }
.orange { fill: none; stroke: #f29a1a; }
.ma { fill: none; stroke-width: 1; }
.note { fill: none; stroke: #f2f2f2; }
.lbl { fill: #f0f0f0; font-size: 12px; }
.lbl.dim { fill: #cfd1d4; }
.mark { fill: #fff; font-size: 12px; text-anchor: middle; }
.mark.s { fill: #e01818; font-size: 11px; font-weight: 700; }
.ico { fill: none; stroke: #5a5f6a; }

.legend { position: absolute; left: 4px; top: 0; height: 16px; display: flex; align-items: center; white-space: nowrap; }
.legend.vol { top: 792px; left: 3px; }
.lg-title { color: #e4e6ea; margin-right: 7px; letter-spacing: 0.15px; }
.lg-item { margin-right: 4.900px; letter-spacing: 0.4px; }
.drop { width: 13px; height: 13px; border-radius: 50%; background: #6a6e78; display: flex; align-items: center; justify-content: center; margin-right: 4px; flex: none; }
.drop.top { margin-right: 2.500px; }
.drop svg { width: 8px; height: 6px; fill: none; stroke: #1b212c; stroke-width: 1.300; }
.vol-name { margin-right: 5px; }
.v-a { margin-right: 9px; }
.v-b { margin-right: 5px; letter-spacing: 0.4px; }
.c-white { color: #f2f2f2; }
.c-yellow { color: #f5f52a; }
.c-mag { color: #e01fe0; }
.c-lime { color: #1fe01f; }
.c-gray { color: #b9bcc2; }
.c-blue { color: #1f78b4; }

.ind-tabs { height: 18px; flex: none; display: flex; margin-top: 1px; background: #2a2e3b; padding-left: 2px; color: #c9cbd0; }
.rel-tabs { height: 22px; flex: none; display: flex; margin-top: 2px; background: #2a2e3b; padding-left: 2px; color: #c9cbd0; }
.tab { padding: 0 3.500px; line-height: 17px; border-right: 1px solid #14171e; white-space: nowrap; display: block; }
.tab.first { padding: 0 3.500px; }
.tab.win { padding: 0 4px; }
.tab.sel { color: #e03a3a; }
.ind-right { margin-left: auto; display: flex; }
.ind-right .tab { border-right: 0; border-left: 1px solid #14171e; }
.fix-a { width: 41px; padding: 0; text-align: center; }
.fix-b { width: 40px; padding: 0; text-align: center; }
.sq { width: 25px; padding: 0; text-align: center; }
.rel-tabs .tab { line-height: 22px; }
.tab.ic { padding: 0 5px; width: 10px; display: flex; align-items: center; }
.tab.ic svg { width: 12px; height: 14px; fill: none; stroke: #6a6e78; flex: none; }
.tab.wide { padding: 0 6px; font-size: 12.500px; }
.tab.f10 { width: 49px; padding: 0; text-align: center; }

/* quote */
.quote { width: 234px; flex: none; box-sizing: border-box; border-left: 1px solid #101319; border-right: 1px solid #101319; display: flex; flex-direction: column; font-size: 13.800px; }
.q-head { height: 58px; flex: none; display: flex; }
.q-info { width: 179px; padding-left: 4px; box-sizing: border-box; flex: none; }
.q-name { margin-top: 5px; height: 20px; line-height: 20px; font-size: 15px; white-space: nowrap; }
.q-cn { color: #2fc9d6; }
.q-code { color: #eee; font-size: 15.800px; }
.q-price { margin-top: 5px; display: flex; align-items: baseline; color: #14b04a; font-size: 14px; white-space: nowrap; }
.q-price b { font-size: 19px; }
.qp1 { margin-left: 10px; }
.qp2 { margin-left: 7px; }
.q-sector { width: 45px; height: 48px; margin-top: 5px; background: #2a2e3b; flex: none; display: flex; flex-direction: column; align-items: center; font-size: 12.500px; }
.q-sector span { margin-top: 4px; height: 18px; line-height: 18px; }
.q-sector em { margin-top: 6px; font-style: normal; font-size: 12.500px; color: #14b04a; }
.q-btns { height: 22px; flex: none; display: flex; gap: 5px; padding-left: 6px; }
.qb { width: 50px; height: 20px; border: 1px solid #70757f; line-height: 20px; text-align: center; color: #9fa2a8; flex: none; }
.qb.buy { border-color: #d0363a; color: #e03a3a; }
.qb.sell { border-color: #2f86d0; color: #3a96e0; }
.book { display: flex; flex-direction: column; }
.asks { margin-top: 0; border-top: 1px solid #2c313c; padding-top: 5px; }
.row { height: 18px; line-height: 18px; display: flex; padding: 0 5px 0 7px; }
.l { width: 60px; color: #e4e6ea; flex: none; }
.p { width: 43px; flex: none; text-align: right; }
.v { flex: 1; text-align: right; }
.split { height: 1px; margin: 1px 0 0; display: flex; flex: none; }
.split i { width: 174px; background: #d89a28; display: block; }
.split u { flex: 1; background: #2f86d0; display: block; }
.hr { height: 1px; flex: none; background: #2c313c; }
.stats { padding-top: 1px; }
.stats.pad { padding-bottom: 4px; }
.srow { height: 19px; line-height: 19px; display: flex; padding: 0 5px 0 7px; white-space: nowrap; }
.sl { width: 50px; flex: none; }
.sl.second { width: 46px; margin-left: 16px; }
.sv { width: 52px; flex: none; text-align: right; }
.sv:last-child { flex: 1; width: auto; }
.state { height: 20px; line-height: 20px; padding-left: 6px; flex: none; }
.flow { height: 20px; box-sizing: border-box; display: flex; align-items: center; padding: 0 5px 3px 7px; flex: none; }
.flow-ico { width: 12px; height: 12px; fill: none; stroke: #6a6e78; margin-left: 2px; flex: none; }
.flow-bar { width: 24px; height: 7px; background: #14c04a; margin-left: 21px; flex: none; display: block; }
.fa { margin-left: 11px; }
.fb { margin-left: auto; }
.ticks { padding-top: 2px; flex: none; }
.tk { height: 18px; line-height: 18px; display: flex; padding-left: 6px; }
.t1 { width: 40px; flex: none; }
.t2 { width: 67px; text-align: right; flex: none; }
.t3 { width: 61px; text-align: right; flex: none; }
.t4 { width: 17px; margin-left: 8px; text-align: center; flex: none; }
.t5 { width: 28px; text-align: right; color: #787c84; flex: none; }
.q-tabs { margin-top: auto; margin-bottom: 1px; height: 17px; display: flex; background: #2a2e3b; flex: none; }
.qt { width: 29px; line-height: 17px; text-align: center; font-size: 12.500px; color: #c9cbd0; border-right: 1px solid #14171e; box-sizing: border-box; flex: none; }
.qt.on { background: #e03236; color: #fff; width: 28px; }

/* extra */
.extra { flex: 1; min-width: 0; overflow: hidden; font-size: 13.500px; color: #8a8e96; padding-left: 4px; white-space: nowrap; display: flex; flex-direction: column; }
.ex-code { margin-top: 2px; color: #eee; font-size: 15px; line-height: 20px; }
.ex-nums { display: flex; flex-direction: column; padding-left: 20px; margin-top: 3px; font-size: 11px; color: #b0b2b6; }
.ex-nums span { height: 18.300px; line-height: 18.300px; }
.ex-list { display: flex; flex-direction: column; margin-top: 7px; }
.ex-group { padding: 3px 0; border-bottom: 1px solid #2c313c; }
.ex-group.tail-a { padding-bottom: 7px; }
.ex-group.tail-b { padding-bottom: 11px; }
.ex-group.tail-c { padding-bottom: 6px; }
.ex-group.predict-g { padding: 2px 0 4px; }
.ex-group.tight-t { padding-top: 2px; }
.ex-group.last { border-bottom: 0; }
.ex-row { height: 21px; line-height: 21px; }
.ex-row.head { height: 19px; line-height: 19px; }
.white { color: #e4e6ea; }
.bold { font-weight: 700; }
.redtxt { color: #d8283c; font-size: 13px; }
.thumb { display: flex; align-items: center; }
.pill { display: flex; align-items: center; background: #e0304a; border-radius: 9px; height: 16px; width: 50px; flex: none; color: #fff; margin-left: 1px; }
.pill svg { width: 16px; height: 16px; flex: none; }
.pill b { margin-left: 3px; font-weight: 400; font-size: 13px; }
.predict { color: #3a8fe8; background: #14306e; padding: 1px 3px; margin-left: 3px; }

/* action bar */
.actions { height: 22px; flex: none; background: #282c38; display: flex; align-items: center; color: #a8abb2; padding-left: 6px; }
.act { display: flex; align-items: center; margin-right: 16.300px; white-space: nowrap; }
.act svg { width: 16px; height: 16px; fill: none; stroke: #a8abb2; margin-right: 4px; flex: none; }
.plus { position: relative; margin-left: 312px; font-size: 18px; font-weight: 700; color: #c9cbd0; }
.plus-sep { width: 1px; height: 14px; background: #3a404c; margin-left: 10px; }

/* status bar */
.status { height: 28px; flex: none; display: flex; align-items: center; font-size: 12.500px; white-space: nowrap; background: #1c212c; }
.idx { display: flex; }
.i-name { color: #e4e6ea; }
.i-amt { color: #e4e6ea; }
.red { color: #e03a3e; }
.green { color: #14b04a; }
.dgreen { color: #0f7a22; }
.purple { color: #a01cc0; }
.white { color: #e4e6ea; }
.meter { display: flex; flex-direction: column; margin-left: 2px; }
.idx + .meter { margin-left: 8px; }
.cells { display: flex; height: 7px; border: 1px solid #e4e6ea; }
.cells i { width: 9.500px; display: block; border-right: 1px solid #e4e6ea; }
.cells i:last-child { border-right: 0; }
.dashes { display: flex; gap: 1px; margin-top: 1px; margin-left: 4px; }
.dashes i { width: 7px; height: 5px; display: block; background: repeating-linear-gradient(to bottom, #d01818 0, #d01818 2px, transparent 2px, transparent 3px); }
.signal { width: 14px; height: 15px; fill: none; stroke: #a8abb2; margin-left: 9px; flex: none; }
.conn-n { width: 12px; height: 13px; border: 1px solid #c9cbd0; line-height: 13px; text-align: center; margin-left: 6px; flex: none; }
.conn { margin-left: 3px; }

/* taskbar */
.taskbar { height: 7px; flex: none; background: #3c7fae; border-top: 1px solid #7fb6d8; display: flex; box-sizing: border-box; overflow: hidden; }
.dot { width: 10px; height: 10px; border-radius: 50%; margin-top: 1px; flex: none; }
.d1 { background: #d6d62a; margin-left: 13px; }
.d2 { background: #2a7fd6; margin-left: 2px; margin-right: 5px; }
.tb-white { width: 144px; background: #eef0f2; }
.tb-blue { width: 55px; background: #2a8ce8; margin-right: 6px; }
.tb-tile { width: 59px; background: #d6dde4; margin-right: 4px; display: flex; justify-content: center; }
.tile-red { width: 16px; height: 6px; background: #d62a2a; display: block; }
.tile-green { width: 10px; height: 4px; background: #2aa84a; display: block; border-radius: 4px 4px 0 0; }
</style>

<style>
html, body { margin: 0; background: #1b212c; overflow: hidden; }
</style>
